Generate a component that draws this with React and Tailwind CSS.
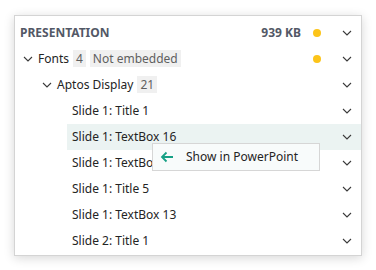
function Chevron({ className = '' }) {
  return (
    <svg width="10" height="6" viewBox="0 0 10 6" className={className} fill="none">
      <path d="M1 1l4 4 4-4" stroke="#3a3a3a" strokeWidth="1.1" />
    </svg>
  )
}

function Row({ children, active, right }) {
  return (
    <div className={`flex items-center h-[26px] pr-[9px] ${active ? 'bg-[#ebf3f2]' : ''}`}>
      <div className="flex items-center flex-1 min-w-0">{children}</div>
      {right}
      <Chevron className="ml-[21px]" />
    </div>
  )
}

const Badge = ({ children }) => (
  <span className="bg-[#f0f0f0] text-[#5f5f5f] px-[3px] leading-[18px]">{children}</span>
)

const slides = [
  'Slide 1: Title 1',
  'Slide 1: TextBox 16',
  'Slide 1: TextBox',
  'Slide 1: Title 5',
  'Slide 1: TextBox 13',
  'Slide 2: Title 1',
]

export default function App() {
  return (
    <div className="w-[376px] h-[270px] bg-white pt-[15px] pl-[14px] text-[12px] text-[#242424]" style={{ fontFamily: '"Noto Sans", sans-serif' }}>
      <div className="relative w-[348px] h-[241px] bg-white border border-[#d4d4d4] shadow-[0_2px_10px_rgba(0,0,0,0.16)] pt-[4px]">
        <Row right={<span className="w-[8px] h-[8px] rounded-full bg-[#fcc419]" />}>
          <span className="pl-[5px] font-bold text-[#535866] flex-1">PRESENTATION</span>
          <span className="font-bold text-[#535866] mr-[12px]">939 KB</span>
        </Row>
        <Row right={<span className="w-[8px] h-[8px] rounded-full bg-[#fcc419]" />}>
          <Chevron className="ml-[8px] mr-[5px]" />
          <span>Fonts</span>
          <span className="ml-[4px]"><Badge>4</Badge></span>
          <span className="ml-[4px]"><Badge>Not embedded</Badge></span>
        </Row>
        <Row>
          <Chevron className="ml-[27px] mr-[5px]" />
          <span>Aptos Display</span>
          <span className="ml-[4px]"><Badge>21</Badge></span>
        </Row>
        <div className="ml-[52px]">
          {slides.map((s, i) => (
            <Row key={i} active={i === 1}>
              <span className="pl-[5px]">{s}</span>
            </Row>
          ))}
        </div>
        <div className="absolute left-[137px] top-[127px] w-[168px] h-[28px] bg-[#f8fbfb] border border-[#d6d6d6] flex items-center">
          <svg width="14" height="12" viewBox="0 0 14 12" className="ml-[7px] mr-[12px]" fill="none">
            <path d="M13 6H2M6.5 1.5L2 6l4.5 4.5" stroke="#16a085" strokeWidth="1.8" />
          </svg>
          <span>Show in PowerPoint</span>
        </div>
      </div>
    </div>
  )
}
